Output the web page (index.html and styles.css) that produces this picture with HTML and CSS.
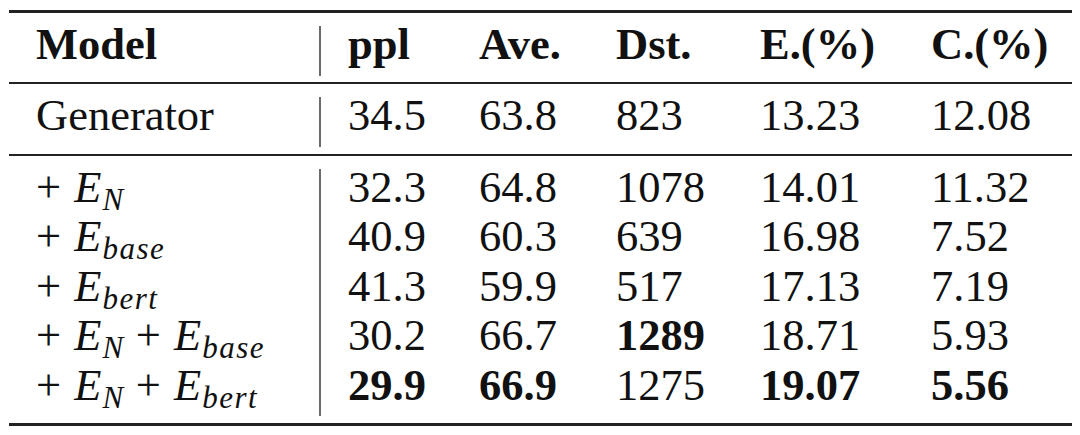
FILE: index.html
```html
<!DOCTYPE html>
<html>
<head>
<meta charset="utf-8">
<link rel="stylesheet" href="styles.css">
</head>
<body>
<div class="table">
  <div class="section head">
    <div class="cell model b">Model</div>
    <div class="bar"></div>
    <div class="cell first b">ppl</div>
    <div class="cell b">Ave.</div>
    <div class="cell b">Dst.</div>
    <div class="cell b">E.(%)</div>
    <div class="cell b">C.(%)</div>
  </div>
  <div class="section gen">
    <div class="cell model">Generator</div>
    <div class="bar"></div>
    <div class="cell first">34.5</div>
    <div class="cell">63.8</div>
    <div class="cell">823</div>
    <div class="cell">13.23</div>
    <div class="cell">12.08</div>
  </div>
  <div class="section data">
    <div class="bar"></div>

    <div class="cell model">+ <span class="m">E<span class="sub">N</span></span></div>
    <div class="cell first">32.3</div>
    <div class="cell">64.8</div>
    <div class="cell">1078</div>
    <div class="cell">14.01</div>
    <div class="cell">11.32</div>

    <div class="cell model">+ <span class="m">E<span class="sub">base</span></span></div>
    <div class="cell first">40.9</div>
    <div class="cell">60.3</div>
    <div class="cell">639</div>
    <div class="cell">16.98</div>
    <div class="cell">7.52</div>

    <div class="cell model">+ <span class="m">E<span class="sub">bert</span></span></div>
    <div class="cell first">41.3</div>
    <div class="cell">59.9</div>
    <div class="cell">517</div>
    <div class="cell">17.13</div>
    <div class="cell">7.19</div>

    <div class="cell model">+ <span class="m">E<span class="sub">N</span></span> + <span class="m">E<span class="sub">base</span></span></div>
    <div class="cell first">30.2</div>
    <div class="cell">66.7</div>
    <div class="cell b">1289</div>
    <div class="cell">18.71</div>
    <div class="cell">5.93</div>

    <div class="cell model">+ <span class="m">E<span class="sub">N</span></span> + <span class="m">E<span class="sub">bert</span></span></div>
    <div class="cell first b">29.9</div>
    <div class="cell b">66.9</div>
    <div class="cell">1275</div>
    <div class="cell b">19.07</div>
    <div class="cell b">5.56</div>
  </div>
</div>
</body>
</html>
```

FILE: styles.css
```css
body {
  margin: 0;
  padding: 10px 8px 0 9px;
  background: #ffffff;
  font-family: "Liberation Serif", serif;
  font-size: 44.5px;
  color: #111111;
}

.table {
  width: 1063px;
  border-top: 3px solid #222222;
  border-bottom: 3px solid #222222;
}

.section {
  display: grid;
  grid-template-columns: 310px 2px 158px 137px 144px 171px 1fr;
  grid-auto-rows: 49.5px;
  line-height: 49.5px;
  padding: 7px 0 13px 0;
}

.head {
  padding-bottom: 12.5px;
  border-bottom: 2px solid #222222;
}

.gen {
  border-bottom: 2px solid #222222;
}

.data {
  grid-template-rows: repeat(5, 49.5px);
}

.bar {
  grid-column: 2;
  grid-row: 1 / -1;
  background: #6a6a6a;
  margin-top: 6px;
  margin-bottom: -6px;
}

.cell {
  white-space: nowrap;
}

.model {
  grid-column: 1;
  padding-left: 27px;
}

.first {
  padding-left: 27px;
}

.b {
  font-weight: bold;
}

.m {
  font-style: italic;
  padding-left: 2px;
}

.sub {
  position: relative;
  top: 8px;
  font-size: 31px;
  letter-spacing: 1.5px;
  margin-left: 1px;
}
```
